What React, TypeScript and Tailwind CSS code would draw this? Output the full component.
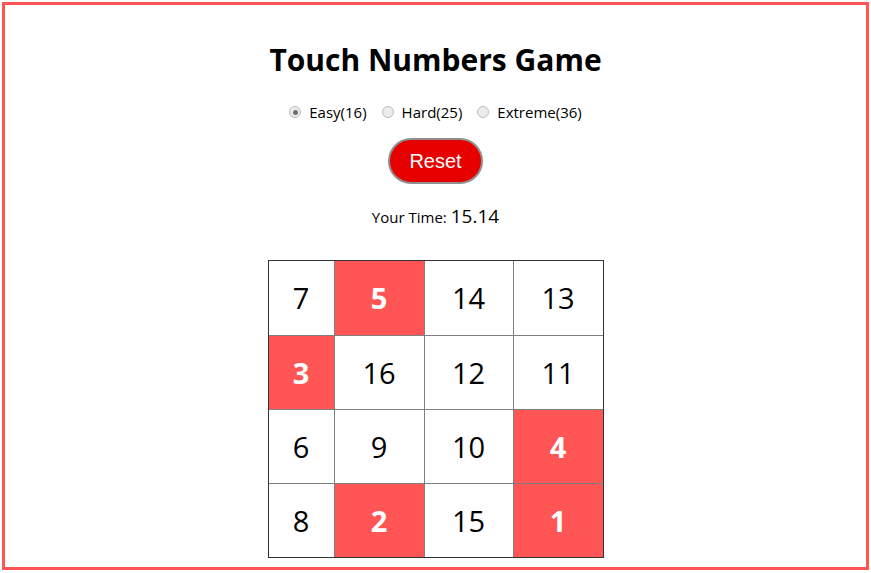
import React from "react";

const grid = [
  [7, 5, 14, 13],
  [3, 16, 12, 11],
  [6, 9, 10, 4],
  [8, 2, 15, 1],
];
const colW = ["w-[65px]", "w-[90px]", "w-[89px]", "w-[90px]"];

function Radio({ label, checked }: { label: string; checked?: boolean }) {
  return (
    <label className="flex items-center">
      <span className="w-[12px] h-[12px] rounded-full border border-[#bdbdbd] bg-[#ececec] flex items-center justify-center mr-[8px]">
        {checked && <span className="w-[5px] h-[5px] rounded-full bg-[#6f6f6f]" />}
      </span>
      <span>{label}</span>
    </label>
  );
}

export default function App() {
  return (
    <div
      className="m-[2px] h-[568px] border-[3px] border-[#ff5555] box-border bg-white text-black flex flex-col items-center"
      style={{ fontFamily: '"Open Sans", "Noto Sans", sans-serif' }}
    >
      <h1 className="mt-[35px] text-[30px] font-bold leading-[40px]">Touch Numbers Game</h1>
      <div className="mt-[22px] flex items-center gap-[15px] text-[15px] leading-[20px]">
        <Radio label="Easy(16)" checked />
        <Radio label="Hard(25)" />
        <Radio label="Extreme(36)" />
      </div>
      <button
        className="mt-[16px] w-[95px] h-[46px] rounded-full bg-[#e60000] text-white text-[20px] border-2 border-[#8f8f8f] leading-none"
        style={{ fontFamily: '"Liberation Sans", Arial, sans-serif' }}
      >
        Reset
      </button>
      <div className="mt-[20px] flex items-baseline text-[15px] leading-[24px]">
        <span>Your Time:&nbsp;</span>
        <span className="text-[19px]">15.14</span>
      </div>
      <div className="mt-[31px] border border-[#333] flex flex-col">
        {grid.map((row, r) => (
          <div key={r} className="flex">
            {row.map((n, c) => {
              const hit = n <= 5;
              return (
                <div
                  key={c}
                  className={`${colW[c]} h-[74px] flex items-center justify-center text-[29px] border-[#808080] ${
                    c > 0 ? "border-l" : ""
                  } ${r > 0 ? "border-t" : ""} ${hit ? "bg-[#ff5555] text-white font-bold" : "bg-white"}`}
                >
                  {n}
                </div>
              );
            })}
          </div>
        ))}
      </div>
    </div>
  );
}
